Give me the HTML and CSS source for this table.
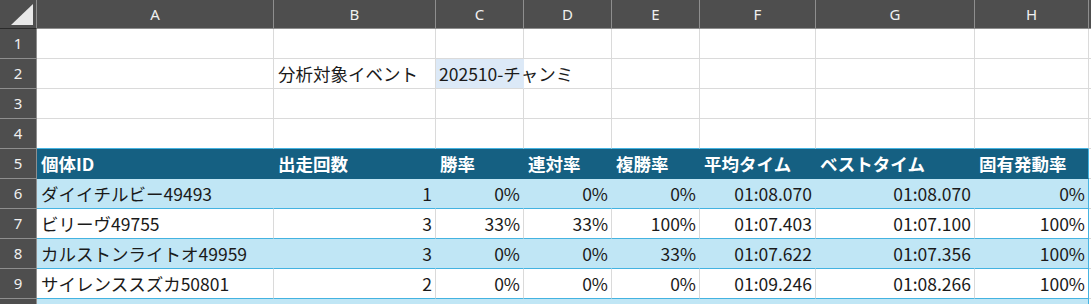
FILE: index.html
```html
<!DOCTYPE html>
<html lang="ja">
<head>
<meta charset="utf-8">
<link rel="stylesheet" href="styles.css">
</head>
<body>
<div class="sheet">
  <div class="row colhead">
    <div class="corner"><svg width="36" height="28" viewBox="0 0 36 28"><polygon points="11,25 33,25 33,4" fill="#e8e8e8"/></svg></div>
    <div class="ch">A</div><div class="ch">B</div><div class="ch">C</div><div class="ch">D</div><div class="ch">E</div><div class="ch">F</div><div class="ch">G</div><div class="ch">H</div><div class="ch"></div>
  </div>
  <div class="row">
    <div class="rh">1</div><div class="c"></div><div class="c"></div><div class="c"></div><div class="c"></div><div class="c"></div><div class="c"></div><div class="c"></div><div class="c"></div><div class="c"></div>
  </div>
  <div class="row">
    <div class="rh">2</div><div class="c"></div><div class="c">分析対象イベント</div><div class="c sel">202510-チャンミ</div><div class="c"></div><div class="c"></div><div class="c"></div><div class="c"></div><div class="c"></div><div class="c"></div>
  </div>
  <div class="row">
    <div class="rh">3</div><div class="c"></div><div class="c"></div><div class="c"></div><div class="c"></div><div class="c"></div><div class="c"></div><div class="c"></div><div class="c"></div><div class="c"></div>
  </div>
  <div class="row above">
    <div class="rh">4</div><div class="c"></div><div class="c"></div><div class="c"></div><div class="c"></div><div class="c"></div><div class="c"></div><div class="c"></div><div class="c"></div><div class="c plain"></div>
  </div>
  <div class="row thead">
    <div class="rh">5</div><div class="c">個体ID</div><div class="c">出走回数</div><div class="c">勝率</div><div class="c">連対率</div><div class="c">複勝率</div><div class="c">平均タイム</div><div class="c">ベストタイム</div><div class="c last">固有発動率</div><div class="c plain"></div>
  </div>
  <div class="row band">
    <div class="rh">6</div><div class="c">ダイイチルビー49493</div><div class="c num">1</div><div class="c num">0%</div><div class="c num">0%</div><div class="c num">0%</div><div class="c num">01:08.070</div><div class="c num">01:08.070</div><div class="c num last">0%</div><div class="c plain"></div>
  </div>
  <div class="row data">
    <div class="rh">7</div><div class="c">ビリーヴ49755</div><div class="c num">3</div><div class="c num">33%</div><div class="c num">33%</div><div class="c num">100%</div><div class="c num">01:07.403</div><div class="c num">01:07.100</div><div class="c num last">100%</div><div class="c plain"></div>
  </div>
  <div class="row band">
    <div class="rh">8</div><div class="c">カルストンライトオ49959</div><div class="c num">3</div><div class="c num">0%</div><div class="c num">0%</div><div class="c num">33%</div><div class="c num">01:07.622</div><div class="c num">01:07.356</div><div class="c num last">100%</div><div class="c plain"></div>
  </div>
  <div class="row data">
    <div class="rh">9</div><div class="c">サイレンススズカ50801</div><div class="c num">2</div><div class="c num">0%</div><div class="c num">0%</div><div class="c num">0%</div><div class="c num">01:09.246</div><div class="c num">01:08.266</div><div class="c num last">100%</div><div class="c plain"></div>
  </div>
  <div class="row band">
    <div class="rh"></div><div class="c"></div><div class="c"></div><div class="c"></div><div class="c"></div><div class="c"></div><div class="c"></div><div class="c"></div><div class="c last"></div><div class="c plain"></div>
  </div>
</div>
</body>
</html>
```

FILE: styles.css
```css
html, body {
  margin: 0;
  padding: 0;
  background: #ffffff;
  overflow: hidden;
}

.sheet {
  width: 1091px;
  height: 304px;
  overflow: hidden;
  font-family: "Noto Sans CJK JP", "Noto Sans", sans-serif;
  font-size: 17.5px;
  color: #1a1a1a;
}

.row {
  display: grid;
  grid-template-columns: 37px 237px 162px 88px 88px 88px 116px 159px 114px 60px;
  height: 30px;
}

.row > div {
  box-sizing: border-box;
  border-right: 1px solid #dadada;
  border-bottom: 1px solid #dadada;
  white-space: nowrap;
  display: flex;
  align-items: center;
  padding: 0 4px;
  line-height: 1;
}

.colhead {
  height: 29px;
  background: #4e4e4e;
}

.colhead > div {
  border-right-color: #8e8e8e;
  border-bottom-color: #8e8e8e;
  justify-content: center;
  color: #f0f0f0;
  font-family: "Noto Sans", "Liberation Sans", sans-serif;
  font-size: 15px;
  padding: 0;
}

.colhead > .corner {
  border-bottom-color: #2a2a2a;
  padding: 0;
  display: block;
}

.corner svg {
  display: block;
}

.row > .rh {
  background: #4e4e4e;
  border-right-color: #8e8e8e;
  border-bottom-color: #8e8e8e;
  color: #f0f0f0;
  justify-content: center;
  font-family: "Noto Sans", "Liberation Sans", sans-serif;
  font-size: 15px;
  padding: 0;
}

.row > .sel {
  background: #dce9f7;
  border-right-color: #dce9f7;
  overflow: visible;
  padding-left: 3px;
}

.above > .c {
  border-bottom-color: #44b3e1;
}

.above > .plain {
  border-bottom-color: #dadada;
}

.thead > .c {
  background: #156082;
  border-right-color: #156082;
  border-bottom-color: #156082;
  color: #ffffff;
  font-weight: 700;
}

.band > .c {
  background: #c0e6f5;
  border-right-color: #c0e6f5;
  border-bottom-color: #44b3e1;
}

.data > .c {
  border-bottom-color: #44b3e1;
}

.row > .num {
  justify-content: flex-end;
  padding-right: 3px;
}

.row > .last {
  border-right-color: #44b3e1;
}

.row > .plain {
  background: #ffffff;
  border-right-color: #dadada;
  border-bottom-color: #dadada;
}
```
